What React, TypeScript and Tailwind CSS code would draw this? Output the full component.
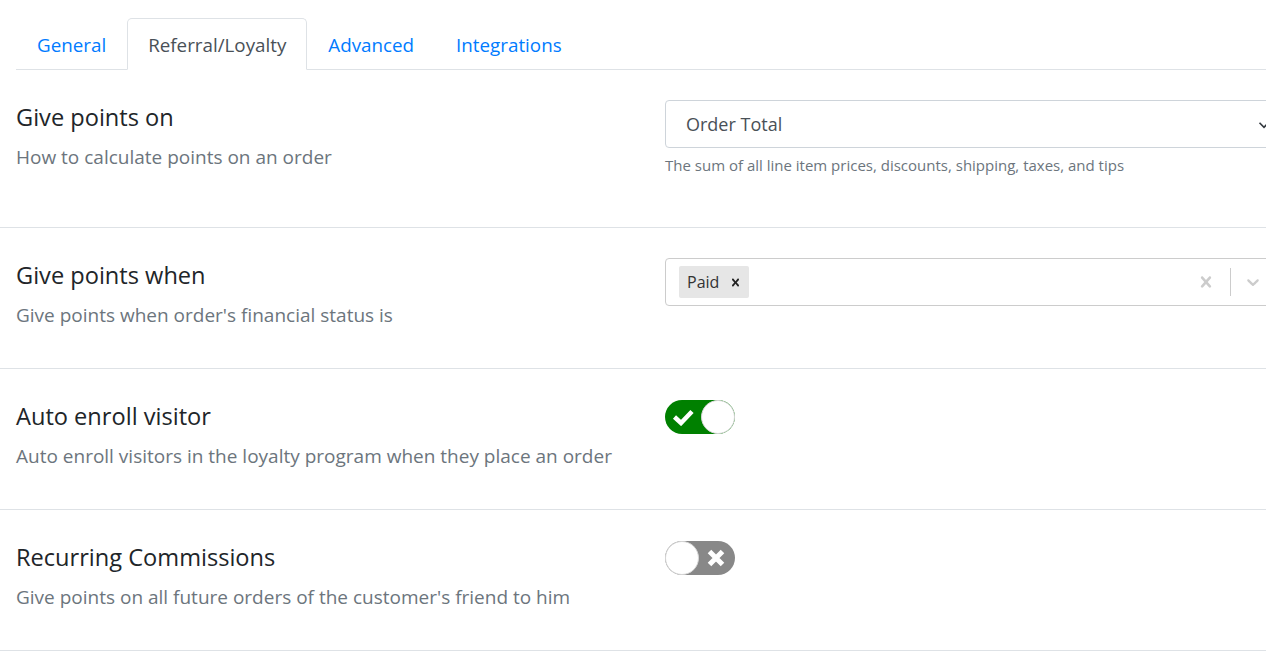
import { useState } from 'react';

const font = { fontFamily: '"Segoe UI", "Open Sans", "Noto Sans", sans-serif' };

const tabs = ['General', 'Referral/Loyalty', 'Advanced', 'Integrations'];

const crossPath =
  'M14.348 14.849c-0.469 0.469-1.229 0.469-1.697 0l-2.651-3.030-2.651 3.029c-0.469 0.469-1.229 0.469-1.697 0-0.469-0.469-0.469-1.229 0-1.697l2.758-3.15-2.759-3.152c-0.469-0.469-0.469-1.228 0-1.697s1.228-0.469 1.697 0l2.652 3.031 2.651-3.031c0.469-0.469 1.228-0.469 1.697 0s0.469 1.229 0 1.697l-2.758 3.152 2.758 3.15c0.469 0.469 0.469 1.229 0 1.698z';

function Toggle({ on, onChange }: { on: boolean; onChange: () => void }) {
  return (
    <button
      onClick={onChange}
      className={`relative w-[70px] h-[34px] rounded-full flex items-center ${on ? 'bg-[#008000]' : 'bg-[#888888]'}`}
    >
      {on ? (
        <svg width="22" height="18" viewBox="0 0 22 18" className="absolute left-[7px] top-[8px]">
          <polyline points="2.5,9 9,15 20,3.5" fill="none" stroke="white" strokeWidth="4.5" />
        </svg>
      ) : (
        <svg width="20" height="20" viewBox="0 0 20 20" className="absolute right-[9px] top-[7px]">
          <path d="M3.5 3.5 L16.5 16.5 M16.5 3.5 L3.5 16.5" stroke="white" strokeWidth="5" />
        </svg>
      )}
      <span
        className={`absolute top-0 w-[34px] h-[34px] rounded-full bg-white border border-[#d6d6d6] ${on ? 'right-0' : 'left-0'}`}
      />
    </button>
  );
}

function Row({ title, desc, children }: { title: string; desc: string; children: React.ReactNode }) {
  return (
    <div className="flex border-b border-[#dee2e6] pl-4 pt-[30px] pb-[39px]">
      <div className="w-[649px] shrink-0">
        <h4 className="text-[23.6px] leading-[34px] text-[#212529]">{title}</h4>
        <p className="mt-[10px] text-[19px] leading-[27px] text-[#6c757d]">{desc}</p>
      </div>
      <div className="w-[620px] shrink-0">{children}</div>
    </div>
  );
}

export default function App() {
  const [autoEnroll, setAutoEnroll] = useState(true);
  const [recurring, setRecurring] = useState(false);

  return (
    <div className="w-[1266px] h-[657px] overflow-hidden bg-white" style={font}>
      <div className="w-[1266px]">
        <div className="ml-4 pt-[18px] flex border-b border-[#dee2e6]">
          {tabs.map(t => (
            <div
              key={t}
              className={`px-5 pt-[13px] pb-[10px] text-[18.8px] leading-[27px] border rounded-t-[5px] -mb-px ${
                t === 'Referral/Loyalty'
                  ? 'border-[#dee2e6] border-b-white bg-white text-[#495057]'
                  : 'border-transparent text-[#007bff]'
              }`}
            >
              {t}
            </div>
          ))}
        </div>

        <Row title="Give points on" desc="How to calculate points on an order">
          <div className="h-[48px] border border-[#ced4da] rounded-[4px] flex items-center justify-between pl-5 pr-[14px] pt-px text-[18px] text-[#495057]">
            <span>Order Total</span>
            <svg width="12" height="12" viewBox="0 0 16 16">
              <path d="M2 5 L8 11 L14 5" fill="none" stroke="#343a40" strokeWidth="2.2" />
            </svg>
          </div>
          <p className="mt-[6px] mb-[12px] text-[15px] leading-[22px] text-[#6c757d]">
            The sum of all line item prices, discounts, shipping, taxes, and tips
          </p>
        </Row>

        <Row title="Give points when" desc="Give points when order's financial status is">
          <div className="h-[48px] border border-[#cccccc] rounded-[4px] flex items-center pl-[13px] w-[620px]">
            <div className="flex items-center h-[32px] bg-[#e6e6e6] rounded-[2px] pl-[8px] pr-[6px] text-[16px] text-[#333333]">
              <span>Paid</span>
              <svg width="15" height="15" viewBox="0 0 20 20" className="ml-[9px]">
                <path fill="#222" d={crossPath} />
              </svg>
            </div>
            <div className="flex-1" />
            <svg width="22" height="22" viewBox="0 0 20 20" className="mr-[13px]">
              <path fill="#cccccc" d={crossPath} />
            </svg>
            <span className="w-px h-[28px] bg-[#cccccc]" />
            <svg width="20" height="20" viewBox="0 0 20 20" className="ml-[12px] mr-[21px]">
              <path
                fill="#cccccc"
                d="M4.516 7.548c0.436-0.446 1.043-0.481 1.576 0l3.908 3.747 3.908-3.747c0.533-0.481 1.141-0.446 1.574 0 0.436 0.445 0.408 1.197 0 1.615-0.406 0.418-4.695 4.502-4.695 4.502-0.217 0.223-0.502 0.335-0.787 0.335s-0.57-0.112-0.789-0.335c0 0-4.287-4.084-4.695-4.502s-0.436-1.170 0-1.615z"
              />
            </svg>
          </div>
        </Row>

        <Row title="Auto enroll visitor" desc="Auto enroll visitors in the loyalty program when they place an order">
          <div className="pt-px">
            <Toggle on={autoEnroll} onChange={() => setAutoEnroll(v => !v)} />
          </div>
        </Row>

        <Row title="Recurring Commissions" desc="Give points on all future orders of the customer's friend to him">
          <div className="pt-px">
            <Toggle on={recurring} onChange={() => setRecurring(v => !v)} />
          </div>
        </Row>
      </div>
    </div>
  );
}
